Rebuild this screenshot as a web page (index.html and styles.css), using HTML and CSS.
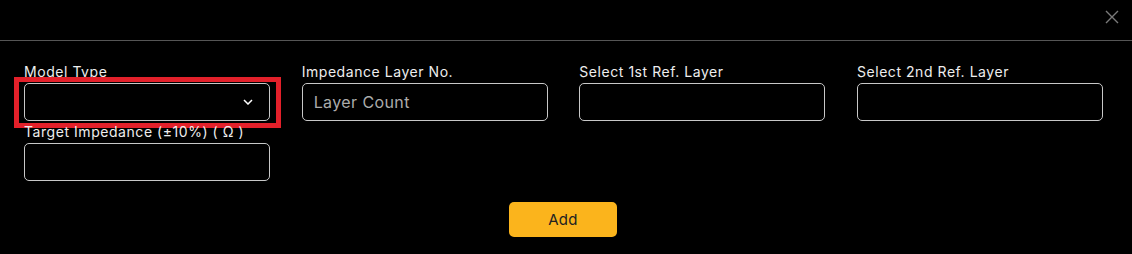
FILE: index.html
```html
<!DOCTYPE html>
<html lang="en">
<head>
<meta charset="utf-8">
<title>Impedance</title>
<link rel="stylesheet" href="styles.css">
</head>
<body>
<div class="modal">
  <div class="modal-header">
    <button class="close" aria-label="Close">
      <svg width="14" height="14" viewBox="0 0 14 14"><path d="M1 1 L13 13 M13 1 L1 13" stroke="#7a7a7a" stroke-width="1.4" fill="none"/></svg>
    </button>
  </div>
  <div class="modal-body">
    <div class="grid">
      <div class="field highlighted">
        <label class="label">Model Type</label>
        <div class="input select">
          <svg class="chev" width="10" height="6" viewBox="0 0 10 6"><path d="M1 1 L5 5 L9 1" stroke="#fff" stroke-width="1.5" fill="none"/></svg>
        </div>
      </div>
      <div class="field">
        <label class="label">Impedance Layer No.</label>
        <div class="input"><span class="placeholder">Layer Count</span></div>
      </div>
      <div class="field">
        <label class="label">Select 1st Ref. Layer</label>
        <div class="input"></div>
      </div>
      <div class="field">
        <label class="label">Select 2nd Ref. Layer</label>
        <div class="input"></div>
      </div>
      <div class="field">
        <label class="label">Target Impedance (±10%) ( Ω )</label>
        <div class="input"></div>
      </div>
    </div>
    <div class="actions">
      <button class="add">Add</button>
    </div>
  </div>
</div>
</body>
</html>
```
FILE: styles.css
```css
html, body {
  margin: 0;
  padding: 0;
  background: #000;
  font-family: "Inter", "Open Sans", sans-serif;
  color: #eee;
}
.modal {
  width: 1132px;
  height: 254px;
  background: #000;
}
.modal-header {
  height: 40px;
  border-bottom: 1px solid #555;
  display: flex;
  justify-content: flex-end;
  align-items: flex-start;
}
.close {
  background: none;
  border: 0;
  padding: 0;
  margin: 10px 13px 0 0;
  width: 14px;
  height: 14px;
  display: block;
}
.close svg { display: block; }
.modal-body {
  padding: 20px 0 0 24px;
}
.grid {
  display: grid;
  grid-template-columns: repeat(4, 246px);
  column-gap: 31.67px;
}
.field {
  display: flex;
  flex-direction: column;
  position: relative;
}
.label {
  font-size: 14px;
  line-height: 22px;
  height: 22px;
  color: #eee;
  letter-spacing: 0.55px;
  white-space: nowrap;
}
.input {
  height: 38px;
  box-sizing: border-box;
  border: 1px solid #c8c8c8;
  border-radius: 5px;
  display: flex;
  align-items: center;
  padding: 0 11px;
}
.placeholder {
  color: #acacac;
  font-size: 16px;
  letter-spacing: 0.4px;
}
.select {
  justify-content: flex-end;
  padding-right: 16px;
}
.chev { display: block; }
.highlighted::after {
  content: "";
  position: absolute;
  left: -10px;
  top: 16px;
  width: 257px;
  height: 41px;
  border: 5px solid #e3202a;
}
.actions {
  display: flex;
  justify-content: center;
  width: 1078px;
  margin-top: 21px;
}
.add {
  width: 108px;
  height: 35px;
  background: #fbb41c;
  border: 0;
  border-radius: 5px;
  font-family: "Inter", "Open Sans", sans-serif;
  font-size: 15px;
  letter-spacing: 0.3px;
  color: #222;
  padding: 0;
}
```
